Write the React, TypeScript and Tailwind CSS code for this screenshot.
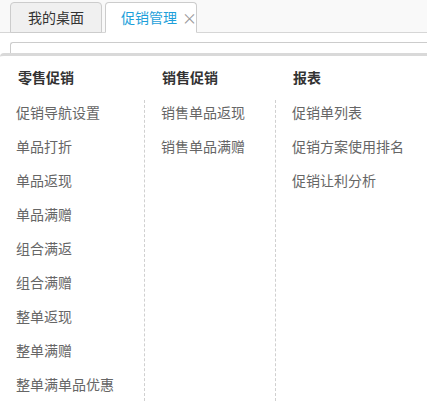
const COLUMNS = [
  {
    title: '零售促销',
    width: 'w-[144px]',
    border: false,
    items: ['促销导航设置', '单品打折', '单品返现', '单品满赠', '组合满返', '组合满赠', '整单返现', '整单满赠', '整单满单品优惠'],
  },
  {
    title: '销售促销',
    width: 'w-[131px]',
    border: true,
    items: ['销售单品返现', '销售单品满赠'],
  },
  {
    title: '报表',
    width: 'flex-1',
    border: true,
    items: ['促销单列表', '促销方案使用排名', '促销让利分析'],
  },
];

export default function App() {
  return (
    <div
      className="w-[427px] h-[401px] overflow-hidden bg-white flex flex-col"
      style={{ fontFamily: '"Noto Sans CJK SC", "Noto Sans", sans-serif' }}
    >
      {/* tabs */}
      <div className="h-[33px] shrink-0 bg-[#f9f9f9] border-b border-[#d6d6d6] flex items-end pl-[10px] gap-[3px]">
        <div className="w-[92px] h-[31px] -mb-px bg-[#f0f0f0] border border-[#cccccc] rounded-t-[4px] flex items-center justify-center text-[14px] text-[#333] whitespace-nowrap">
          我的桌面
        </div>
        <div className="w-[92px] h-[31px] -mb-px bg-white border border-b-white border-[#cccccc] rounded-t-[4px] flex items-center pl-[15px] text-[14px] text-[#1e9fda] whitespace-nowrap">
          促销管理
          <span className="ml-[5px] text-[#999] text-[15px] leading-none">×</span>
        </div>
      </div>

      {/* inner box top */}
      <div className="h-[20px] shrink-0 pt-[9px] pl-[10px]">
        <div className="h-full border-t border-l border-[#cccccc] rounded-tl-[3px]" />
      </div>

      {/* dropdown panel */}
      <div className="flex-1 flex border-t-[3px] border-[#d9d9d9] rounded-tl-[4px] bg-white">
        {COLUMNS.map((col) => (
          <div key={col.title} className={`${col.width} flex flex-col`}>
            <div className="h-[44px] pt-[11px] pl-[18px] text-[14px] leading-[20px] font-bold text-[#333]">
              {col.title}
            </div>
            <div className={`flex-1 flex flex-col pl-[16px] ${col.border ? 'border-l border-dashed border-[#d0d0d0]' : ''}`}>
              {col.items.map((item) => (
                <div
                  key={item}
                  className="h-[34px] first:-mt-[5px] shrink-0 flex items-center text-[14px] text-[#666] whitespace-nowrap"
                >
                  {item}
                </div>
              ))}
            </div>
          </div>
        ))}
      </div>
    </div>
  );
}
